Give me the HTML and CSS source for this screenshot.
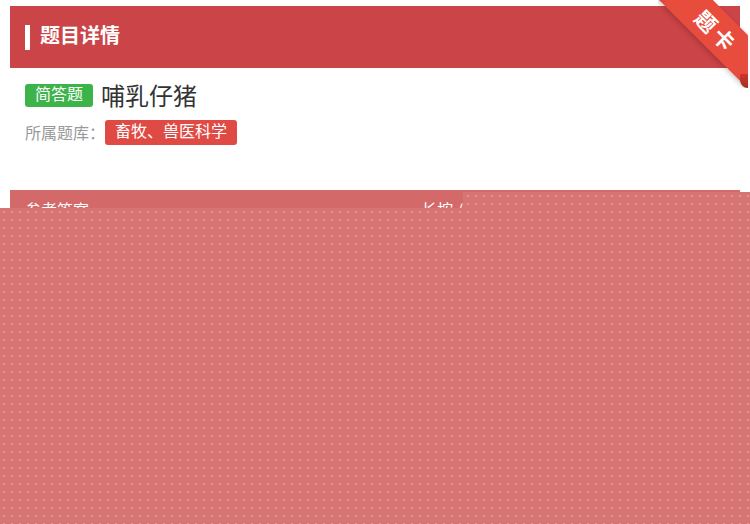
FILE: index.html
```html
<!DOCTYPE html>
<html lang="zh-CN">

<head>
	<title>题目详情</title>
	<meta charset="utf-8">
	<link rel="stylesheet" href="styles.css">
</head>

<body>
	<div class="page">
		<div class="card">
			<div class="card-head">
				<span class="head-bar"></span>
				<h2>题目详情</h2>
			</div>
			<div class="card-body">
				<div class="q-row">
					<span class="tag tag-green">简答题</span>
					<span class="q-title">哺乳仔猪</span>
				</div>
				<div class="q-row q-bank">
					<span class="label">所属题库：</span>
					<span class="tag tag-red">畜牧、兽医科学</span>
				</div>
			</div>
		</div>

		<div class="card card-answer">
			<div class="answer-head">
				<span>参考答案</span>
				<span class="hint">长按 / 点击查看</span>
			</div>
			<div class="answer-body"></div>
		</div>
	</div>

	<!-- corner ribbon -->
	<div class="ribbon">
		<div class="ribbon-band">题卡</div>
		<div class="ribbon-fold"></div>
	</div>

	<!-- mask over the answer -->
	<div class="mask mask-top"></div>
	<div class="mask mask-main"></div>
</body>
</html>
```

FILE: styles.css
```css
* {
	margin: 0;
	box-sizing: border-box;
}

body {
	font-family: 'Noto Sans CJK SC', 'Noto Sans', sans-serif;
	margin: 0;
	padding: 0;
	background: white;
	width: 750px;
	height: 524px;
	overflow: hidden;
	position: relative;
}

.page {
	padding: 6px 10px 0 10px;
}

.card {
	background: white;
}

.card-head {
	display: flex;
	align-items: center;
	height: 62px;
	padding-left: 15px;
	background: #cb4448;
	color: white;
}

.head-bar {
	display: inline-block;
	width: 5px;
	height: 25px;
	background: white;
}

.card-head h2 {
	margin: 0 0 5px 10px;
	font-size: 20px;
	font-weight: bold;
	line-height: 1;
}

.card-body {
	padding: 13px 15px 0 15px;
	height: 110px;
}

.q-row {
	display: flex;
	align-items: center;
}

.tag {
	display: inline-block;
	color: white;
	font-size: 16px;
	line-height: 22px;
	border-radius: 3px;
	padding: 0 10px;
}

.tag-green {
	background: #3cb44a;
	height: 23px;
	line-height: 18px;
}

.q-title {
	margin-left: 8px;
	font-size: 24px;
	color: #333;
	line-height: 1.2;
}

.q-bank {
	margin-top: 10px;
}

.label {
	font-size: 16px;
	color: #999;
}

.tag-red {
	background: #e04a44;
	height: 25px;
	line-height: 20px;
}

.card-answer {
	margin-top: 12px;
}

.answer-head {
	display: flex;
	height: 40px;
	padding: 7px 15px 0 15px;
	background: #d46969;
	color: white;
	font-size: 16px;
}

.hint {
	margin-left: 332px;
}

.answer-body {
	height: 300px;
}

/* ribbon */

.ribbon {
	position: absolute;
	top: 0;
	left: 658px;
	width: 90px;
	height: 88px;
	overflow: hidden;
}

.ribbon-band {
	position: absolute;
	left: -11px;
	top: 12px;
	width: 140px;
	height: 38px;
	transform: rotate(45deg);
	background: linear-gradient(90deg, #c43a30 0%, #e84c3d 10%, #e84c3d 88%, #b8342a 100%);
	box-shadow: -2px 2px 5px rgba(0, 0, 0, 0.2);
	color: white;
	font-size: 21px;
	font-weight: bold;
	text-align: center;
	line-height: 38px;
	letter-spacing: 4px;
}

.ribbon-fold {
	position: absolute;
	right: 0;
	bottom: 0;
	width: 8px;
	height: 14px;
	border-radius: 0 0 0 8px;
	background: linear-gradient(180deg, #c9392d, #a82b22);
}

/* mask */

.mask {
	position: absolute;
	background-color: #d77474;
	background-image: radial-gradient(circle, rgba(240, 160, 160, 0.7) 0.7px, transparent 1.1px);
	background-size: 8px 8px;
	background-attachment: fixed;
}

.mask-top {
	left: 463px;
	top: 192px;
	right: 0;
	height: 16px;
}

.mask-main {
	left: 0;
	top: 208px;
	right: 0;
	bottom: 0;
}
```
